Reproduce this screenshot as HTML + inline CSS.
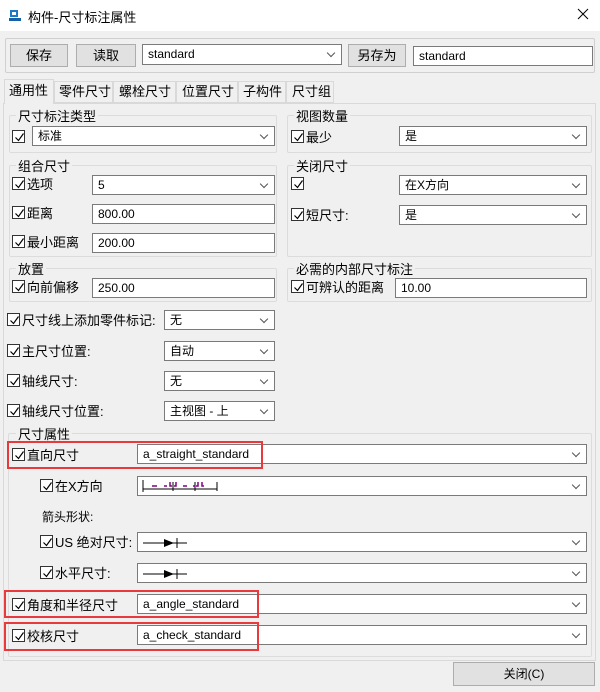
<!DOCTYPE html>
<html><head><meta charset="utf-8"><style>
*{box-sizing:border-box;margin:0;padding:0}
body{width:600px;height:692px;background:#f0f0f0;font-family:"Liberation Sans","Noto Sans CJK SC",sans-serif;font-size:12px;color:#000;position:relative;overflow:hidden}
.a{position:absolute;white-space:nowrap}
.title{left:0;top:0;width:600px;height:31px;background:#fff}
.btn{background:#e1e1e1;border:1px solid #adadad;text-align:center;font-size:13px}
.box{background:#fff;border:1px solid #7a7a7a;padding-left:5px;font-size:12px}
.cmb::after{content:"";position:absolute;right:7px;top:5px;width:5px;height:5px;border-right:1px solid #555;border-bottom:1px solid #555;transform:rotate(45deg)}
.grp{border:1px solid #dcdcdc;border-radius:2px}
.gt{background:#f0f0f0;padding:0 2px;font-size:12px}
.cb{width:13px;height:13px;border:1px solid #333;background:#fff}
.cb svg{position:absolute;left:1px;top:1px}
.red{border:2px solid #e8393c}
</style></head><body>
<div class="a title"></div>
<svg class="a" style="left:8px;top:8px" width="14" height="14"><rect x="1" y="10" width="12" height="3" fill="#1560a8"/><path d="M2 2h8v7H2z" fill="#1e78c8"/><rect x="4" y="4" width="4" height="3" fill="#fff"/></svg>
<div class="a" style="left:28px;top:7px;font-size:13px">构件-尺寸标注属性</div>
<svg class="a" style="left:577px;top:8px" width="12" height="12"><path d="M1 1L11 11M11 1L1 11" stroke="#000" stroke-width="1"/></svg>

<div class="a grp" style="left:5px;top:38px;width:590px;height:35px;border-color:#d0d0d0"></div>
<div class="a btn" style="left:10px;top:44px;width:58px;height:23px;line-height:21px">保存</div>
<div class="a btn" style="left:76px;top:44px;width:60px;height:23px;line-height:21px">读取</div>
<div class="a box cmb" style="left:142px;top:44px;width:200px;height:21px;line-height:19px">standard</div>
<div class="a btn" style="left:348px;top:44px;width:58px;height:23px;line-height:21px">另存为</div>
<div class="a box" style="left:413px;top:46px;width:180px;height:20px;line-height:18px">standard</div>

<div class="a" style="left:3px;top:103px;width:593px;height:558px;border:1px solid #d9d9d9;background:#f0f0f0"></div>
<div class="a" style="left:4px;top:79px;width:50px;height:25px;background:#f0f0f0;border:1px solid #d9d9d9;border-bottom:none;line-height:22px;padding-left:4px;font-size:13px">通用性</div>
<div class="a" style="left:54px;top:81px;width:59px;height:22px;border:1px solid #d9d9d9;line-height:20px;padding-left:4px;font-size:13px">零件尺寸</div>
<div class="a" style="left:113px;top:81px;width:63px;height:22px;border:1px solid #d9d9d9;line-height:20px;padding-left:5px;font-size:13px">螺栓尺寸</div>
<div class="a" style="left:176px;top:81px;width:62px;height:22px;border:1px solid #d9d9d9;line-height:20px;padding-left:5px;font-size:13px">位置尺寸</div>
<div class="a" style="left:238px;top:81px;width:48px;height:22px;border:1px solid #d9d9d9;line-height:20px;padding-left:4px;font-size:13px">子构件</div>
<div class="a" style="left:286px;top:81px;width:48px;height:22px;border:1px solid #d9d9d9;line-height:20px;padding-left:5px;font-size:13px">尺寸组</div>

<div class="a grp" style="left:9px;top:115px;width:268px;height:38px"></div>
<div class="a gt" style="left:16px;top:106px;font-size:13px">尺寸标注类型</div>
<div class="a grp" style="left:287px;top:115px;width:305px;height:38px"></div>
<div class="a gt" style="left:294px;top:106px;font-size:13px">视图数量</div>
<div class="a grp" style="left:9px;top:165px;width:268px;height:92px"></div>
<div class="a gt" style="left:16px;top:156px;font-size:13px">组合尺寸</div>
<div class="a grp" style="left:287px;top:165px;width:305px;height:92px"></div>
<div class="a gt" style="left:294px;top:156px;font-size:13px">关闭尺寸</div>
<div class="a grp" style="left:9px;top:268px;width:268px;height:34px"></div>
<div class="a gt" style="left:16px;top:259px;font-size:13px">放置</div>
<div class="a grp" style="left:287px;top:268px;width:305px;height:34px"></div>
<div class="a gt" style="left:294px;top:259px;font-size:13px">必需的内部尺寸标注</div>
<div class="a grp" style="left:8px;top:433px;width:584px;height:224px"></div>
<div class="a gt" style="left:16px;top:424px;font-size:13px">尺寸属性</div>

<div id="c"></div>
<div class="a box cmb" style="left:32px;top:126px;width:243px;height:20px;line-height:18px">标准</div>
<div class="a box cmb" style="left:399px;top:126px;width:188px;height:20px;line-height:18px">是</div>
<div class="a box cmb" style="left:92px;top:175px;width:183px;height:20px;line-height:18px">5</div>
<div class="a box" style="left:92px;top:204px;width:183px;height:20px;line-height:18px">800.00</div>
<div class="a box" style="left:92px;top:233px;width:183px;height:20px;line-height:18px">200.00</div>
<div class="a box cmb" style="left:399px;top:175px;width:188px;height:20px;line-height:18px">在X方向</div>
<div class="a box cmb" style="left:399px;top:205px;width:188px;height:20px;line-height:18px">是</div>
<div class="a box" style="left:92px;top:278px;width:183px;height:20px;line-height:18px">250.00</div>
<div class="a box" style="left:395px;top:278px;width:192px;height:20px;line-height:18px">10.00</div>
<div class="a box cmb" style="left:164px;top:310px;width:111px;height:20px;line-height:18px">无</div>
<div class="a box cmb" style="left:164px;top:341px;width:111px;height:20px;line-height:18px">自动</div>
<div class="a box cmb" style="left:164px;top:371px;width:111px;height:20px;line-height:18px">无</div>
<div class="a box cmb" style="left:164px;top:401px;width:111px;height:20px;line-height:18px">主视图 - 上</div>

<div class="a box cmb" style="left:137px;top:444px;width:450px;height:20px;line-height:18px">a_straight_standard</div>
<div class="a box cmb" style="left:137px;top:476px;width:450px;height:20px"><svg style="position:absolute;left:4px;top:2px" width="80" height="14"><path d="M1 1v12M1 10h74M31 3v9M53 3v9M75 3v9" stroke="#000" fill="none"/><path d="M10 7h5M22 7h3M28 3v4h2M34 3v4h-2M41 7h4M51 7h2M56 3v4h-2M60 3v4h2" stroke="#800080" stroke-width="1.5" fill="none"/></svg></div>
<div class="a" style="left:42px;top:508px;font-size:12px">箭头形状:</div>
<div class="a box cmb" style="left:137px;top:532px;width:450px;height:20px"><svg style="position:absolute;left:4px;top:3px" width="50" height="14"><path d="M1 7h44M35 2v10" stroke="#000"/><path d="M22 3l10 4-10 4z" fill="#000"/></svg></div>
<div class="a box cmb" style="left:137px;top:563px;width:450px;height:20px"><svg style="position:absolute;left:4px;top:3px" width="50" height="14"><path d="M1 7h44M35 2v10" stroke="#000"/><path d="M22 3l10 4-10 4z" fill="#000"/></svg></div>
<div class="a box cmb" style="left:137px;top:594px;width:450px;height:20px;line-height:18px">a_angle_standard</div>
<div class="a box cmb" style="left:137px;top:625px;width:450px;height:20px;line-height:18px">a_check_standard</div>

<div class="a red" style="left:7px;top:441px;width:256px;height:28px"></div>
<div class="a red" style="left:4px;top:590px;width:255px;height:28px"></div>
<div class="a red" style="left:4px;top:622px;width:255px;height:29px"></div>

<div class="a btn" style="left:453px;top:662px;width:142px;height:24px;line-height:22px;font-size:12px">关闭(C)</div>

<script>
var rows=[[12,130,""],[291,130,"最少"],[12,177,"选项"],[12,206,"距离"],[12,235,"最小距离"],[291,177,""],[291,208,"短尺寸:"],[12,280,"向前偏移"],[291,280,"可辨认的距离"],[7,313,"尺寸线上添加零件标记:"],[7,344,"主尺寸位置:"],[7,374,"轴线尺寸:"],[7,404,"轴线尺寸位置:"],[12,448,"直向尺寸"],[40,479,"在X方向"],[40,535,"US 绝对尺寸:"],[40,566,"水平尺寸:"],[12,598,"角度和半径尺寸"],[12,629,"校核尺寸"]];
var h="";
rows.forEach(function(r){h+='<div class="a cb" style="left:'+r[0]+'px;top:'+r[1]+'px"><svg width="11" height="11"><path d="M1.5 5.5l3 3 5-7" stroke="#000" stroke-width="1.2" fill="none"/></svg></div>';
if(r[2])h+='<div class="a" style="left:'+(r[0]+15)+'px;top:'+(r[1]-3)+'px;font-size:13px">'+r[2]+'</div>';});
document.getElementById("c").innerHTML=h;
</script>
</body></html>
